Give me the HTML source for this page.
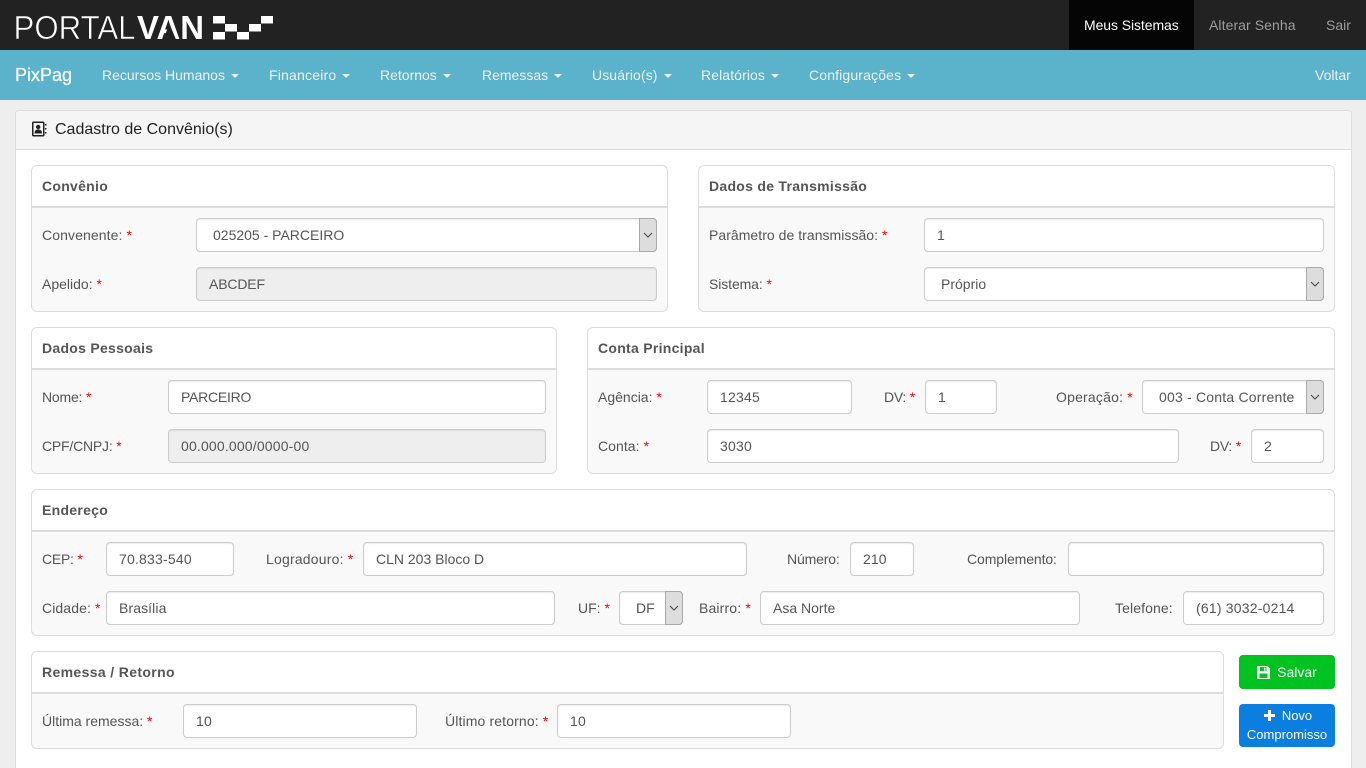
<!DOCTYPE html>
<html lang="pt-BR">
<head>
<meta charset="utf-8">
<title>Cadastro de Convênio(s)</title>
<style>
html,body{margin:0;padding:0;width:1366px;height:768px;overflow:hidden;background:#eee;font-family:"Liberation Sans",sans-serif;font-size:14px;color:#555}
*{box-sizing:border-box}
.a{position:absolute}
.top{left:0;top:0;width:1366px;height:50px;background:#222}
.nav{left:0;top:50px;width:1366px;height:50px;background:#5ab3ca}
.t{position:absolute;white-space:nowrap;line-height:20px}
.n{color:#f0f0f0;top:65px}
.c{display:inline-block;width:0;height:0;margin-left:2px;vertical-align:middle;border-top:4px solid;border-left:4px solid transparent;border-right:4px solid transparent;letter-spacing:0}
.main{left:15px;top:110px;width:1337px;height:658px;background:#fff;border:1px solid #ddd;border-bottom:0;border-radius:4px 4px 0 0}
.mh{left:16px;top:111px;width:1335px;height:39px;background:#f5f5f5;border-bottom:1px solid #ddd;border-radius:3px 3px 0 0}
.p{position:absolute;background:#f9f9f9;border:1px solid #ddd;border-radius:6px;overflow:hidden}
.ph{position:absolute;left:0;top:0;right:0;height:42px;background:#fff;border-bottom:2px solid #ddd;padding:10px 10px 0;font-weight:bold;line-height:20px;color:#555;letter-spacing:.28px}
.l{position:absolute;white-space:nowrap;line-height:20px;color:#555}
.l b{color:#f00;font-weight:normal;letter-spacing:0}
.i{position:absolute;height:34px;background:#fff;border:1px solid #ccc;border-radius:4px;padding:6px 12px;line-height:20px;color:#555;white-space:nowrap;box-shadow:inset 0 1px 1px rgba(0,0,0,.075)}
.ro{background:#eee}
.s{padding-left:16px}
.s i{position:absolute;right:-1px;top:-1px;bottom:-1px;width:18px;background:#ddd;border:1px solid #aaa;border-radius:0 4px 4px 0}
.s svg{position:absolute;left:3px;top:13px}
.btn{position:absolute;border-radius:4px;color:#fff;text-align:center;line-height:20px}
</style>
</head>
<body>
<div class="a top"></div>
<div class="a" style="left:1069px;top:0;width:125px;height:50px;background:#050505"></div>
<svg class="a" style="left:0;top:0" width="290" height="50">
<text x="13.5" y="39" font-family="Liberation Sans" font-size="33" fill="#fff" stroke="#222" stroke-width="0.6" textLength="122" lengthAdjust="spacingAndGlyphs">PORTAL</text>
<text x="137" y="39" font-family="Liberation Sans" font-size="33" font-weight="bold" fill="#fff" textLength="67" lengthAdjust="spacingAndGlyphs">VAN</text>
<polygon points="169.5,24 163,39.5 176,39.5" fill="#222"/>
<g fill="#fff"><rect x="213" y="16" width="12" height="7.5"/><rect x="261" y="16" width="12" height="7.5"/><rect x="225" y="24" width="12" height="7.5"/><rect x="249" y="24" width="12" height="7.5"/><rect x="213" y="32" width="12" height="7.5"/><rect x="237" y="32" width="12" height="7.5"/></g>
</svg>
<div class="t" style="left:1084px;top:15px;color:#fff;letter-spacing:-.08px">Meus Sistemas</div>
<div class="t" style="left:1209px;top:15px;color:#9d9d9d;letter-spacing:.08px">Alterar Senha</div>
<div class="t" style="left:1326px;top:15px;color:#9d9d9d">Sair</div>

<div class="a nav"></div>
<div class="t" style="left:15px;top:65px;font-size:18px;color:#f4f4f4;-webkit-text-stroke:.35px #f4f4f4">PixPag</div>
<div class="t n" style="left:102px">Recursos Humanos <span class="c"></span></div>
<div class="t n" style="left:269px;letter-spacing:.2px">Financeiro <span class="c"></span></div>
<div class="t n" style="left:380px">Retornos <span class="c"></span></div>
<div class="t n" style="left:482px">Remessas <span class="c"></span></div>
<div class="t n" style="left:592px;letter-spacing:.1px">Usuário(s) <span class="c"></span></div>
<div class="t n" style="left:701px;letter-spacing:.1px">Relatórios <span class="c"></span></div>
<div class="t n" style="left:809px;letter-spacing:.15px">Configurações <span class="c"></span></div>
<div class="t n" style="left:1315px">Voltar</div>

<div class="a main"></div>
<div class="a mh"></div>
<svg class="a" style="left:31px;top:121px" width="16" height="16" viewBox="0 0 16 16">
<rect x="1" y="0.5" width="12.5" height="15" rx="1.5" fill="#222"/><rect x="2.5" y="2" width="9.5" height="12" fill="#f5f5f5"/>
<circle cx="7.2" cy="6" r="2.2" fill="#222"/><path d="M3.5 12.5c0-3 1.5-4 3.7-4s3.8 1 3.8 4z" fill="#222"/>
<path d="M14 3h1.5v1.5H14zM14 7h1.5v1.5H14zM14 11h1.5v1.5H14z" fill="#222"/></svg>
<div class="t" style="left:55px;top:120px;font-size:16px;color:#222">Cadastro de Convênio(s)</div>

<div class="p" style="left:31px;top:165px;width:637px;height:147px"><div class="ph">Convênio</div></div>
<div class="l" style="left:42px;top:225px;letter-spacing:.1px">Convenente: <b>*</b></div>
<div class="i s" style="left:196px;top:218px;width:461px">025205 - PARCEIRO<i><svg width="10" height="6"><path d="M1 1l4 4 4-4" fill="none" stroke="#444" stroke-width="1"/></svg></i></div>
<div class="l" style="left:42px;top:274px">Apelido: <b>*</b></div>
<div class="i ro" style="left:196px;top:267px;width:461px;letter-spacing:-.15px">ABCDEF</div>

<div class="p" style="left:698px;top:165px;width:637px;height:147px"><div class="ph">Dados de Transmissão</div></div>
<div class="l" style="left:709px;top:225px;letter-spacing:.04px">Parâmetro de transmissão: <b>*</b></div>
<div class="i" style="left:924px;top:218px;width:400px">1</div>
<div class="l" style="left:709px;top:274px;letter-spacing:-.1px">Sistema: <b>*</b></div>
<div class="i s" style="left:924px;top:267px;width:400px">Próprio<i><svg width="10" height="6"><path d="M1 1l4 4 4-4" fill="none" stroke="#444" stroke-width="1"/></svg></i></div>

<div class="p" style="left:31px;top:327px;width:526px;height:147px"><div class="ph">Dados Pessoais</div></div>
<div class="l" style="left:42px;top:387px;letter-spacing:-.2px">Nome: <b>*</b></div>
<div class="i" style="left:168px;top:380px;width:378px;letter-spacing:-.25px">PARCEIRO</div>
<div class="l" style="left:42px;top:436px;letter-spacing:-.2px">CPF/CNPJ: <b>*</b></div>
<div class="i ro" style="left:168px;top:429px;width:378px;letter-spacing:.17px">00.000.000/0000-00</div>

<div class="p" style="left:587px;top:327px;width:748px;height:147px"><div class="ph">Conta Principal</div></div>
<div class="l" style="left:598px;top:387px">Agência: <b>*</b></div>
<div class="i" style="left:707px;top:380px;width:145px;letter-spacing:.2px">12345</div>
<div class="l" style="left:884px;top:387px;letter-spacing:-.25px">DV: <b>*</b></div>
<div class="i" style="left:925px;top:380px;width:72px">1</div>
<div class="l" style="left:1056px;top:387px;letter-spacing:.2px">Operação: <b>*</b></div>
<div class="i s" style="left:1142px;top:380px;width:182px;letter-spacing:.2px">003 - Conta Corrente<i><svg width="10" height="6"><path d="M1 1l4 4 4-4" fill="none" stroke="#444" stroke-width="1"/></svg></i></div>
<div class="l" style="left:598px;top:436px;letter-spacing:.05px">Conta: <b>*</b></div>
<div class="i" style="left:707px;top:429px;width:472px;letter-spacing:.2px">3030</div>
<div class="l" style="left:1210px;top:436px;letter-spacing:-.25px">DV: <b>*</b></div>
<div class="i" style="left:1251px;top:429px;width:73px">2</div>

<div class="p" style="left:31px;top:489px;width:1304px;height:147px"><div class="ph">Endereço</div></div>
<div class="l" style="left:42px;top:549px;letter-spacing:-.25px">CEP: <b>*</b></div>
<div class="i" style="left:106px;top:542px;width:128px;letter-spacing:.2px">70.833-540</div>
<div class="l" style="left:266px;top:549px;letter-spacing:.2px">Logradouro: <b>*</b></div>
<div class="i" style="left:363px;top:542px;width:384px">CLN 203 Bloco D</div>
<div class="l" style="left:787px;top:549px;letter-spacing:-.15px">Número:</div>
<div class="i" style="left:850px;top:542px;width:64px;letter-spacing:.1px">210</div>
<div class="l" style="left:967px;top:549px;letter-spacing:-.1px">Complemento:</div>
<div class="i" style="left:1068px;top:542px;width:256px"></div>
<div class="l" style="left:42px;top:598px;letter-spacing:.1px">Cidade: <b>*</b></div>
<div class="i" style="left:106px;top:591px;width:449px;letter-spacing:.1px">Brasília</div>
<div class="l" style="left:578px;top:598px">UF: <b>*</b></div>
<div class="i s" style="left:619px;top:591px;width:64px">DF<i><svg width="10" height="6"><path d="M1 1l4 4 4-4" fill="none" stroke="#444" stroke-width="1"/></svg></i></div>
<div class="l" style="left:699px;top:598px;letter-spacing:.15px">Bairro: <b>*</b></div>
<div class="i" style="left:760px;top:591px;width:320px">Asa Norte</div>
<div class="l" style="left:1115px;top:598px;letter-spacing:.1px">Telefone:</div>
<div class="i" style="left:1183px;top:591px;width:141px;letter-spacing:.2px">(61) 3032-0214</div>

<div class="p" style="left:31px;top:651px;width:1193px;height:98px"><div class="ph" style="letter-spacing:.36px">Remessa / Retorno</div></div>
<div class="l" style="left:42px;top:711px">Última remessa: <b>*</b></div>
<div class="i" style="left:183px;top:704px;width:234px;letter-spacing:.2px">10</div>
<div class="l" style="left:445px;top:711px;letter-spacing:.13px">Último retorno: <b>*</b></div>
<div class="i" style="left:557px;top:704px;width:234px;letter-spacing:.2px">10</div>

<div class="btn" style="left:1239px;top:655px;width:96px;height:34px;background:#00c322;padding-top:7px;padding-left:20px">Salvar</div>
<svg class="a" style="left:1257px;top:666px" width="13" height="13" viewBox="0 0 13 13">
<path fill-rule="evenodd" d="M0 0h10.5L13 2.5V13H0zM3 1v4h6.5V1zM2.5 7.5V12h8V7.5z" fill="#fff"/><rect x="7" y="1.5" width="1.5" height="3" fill="#fff"/></svg>
<div class="btn" style="left:1239px;top:704px;width:96px;height:43px;background:#0b7fe0;font-size:13px;padding-top:2px;line-height:19px"><span style="padding-left:20px">Novo</span><br>Compromisso</div>
<svg class="a" style="left:1264px;top:710px" width="11" height="11" viewBox="0 0 11 11"><path d="M4 0h3v4h4v3H7v4H4V7H0V4h4z" fill="#fff"/></svg>
</body>
</html>
